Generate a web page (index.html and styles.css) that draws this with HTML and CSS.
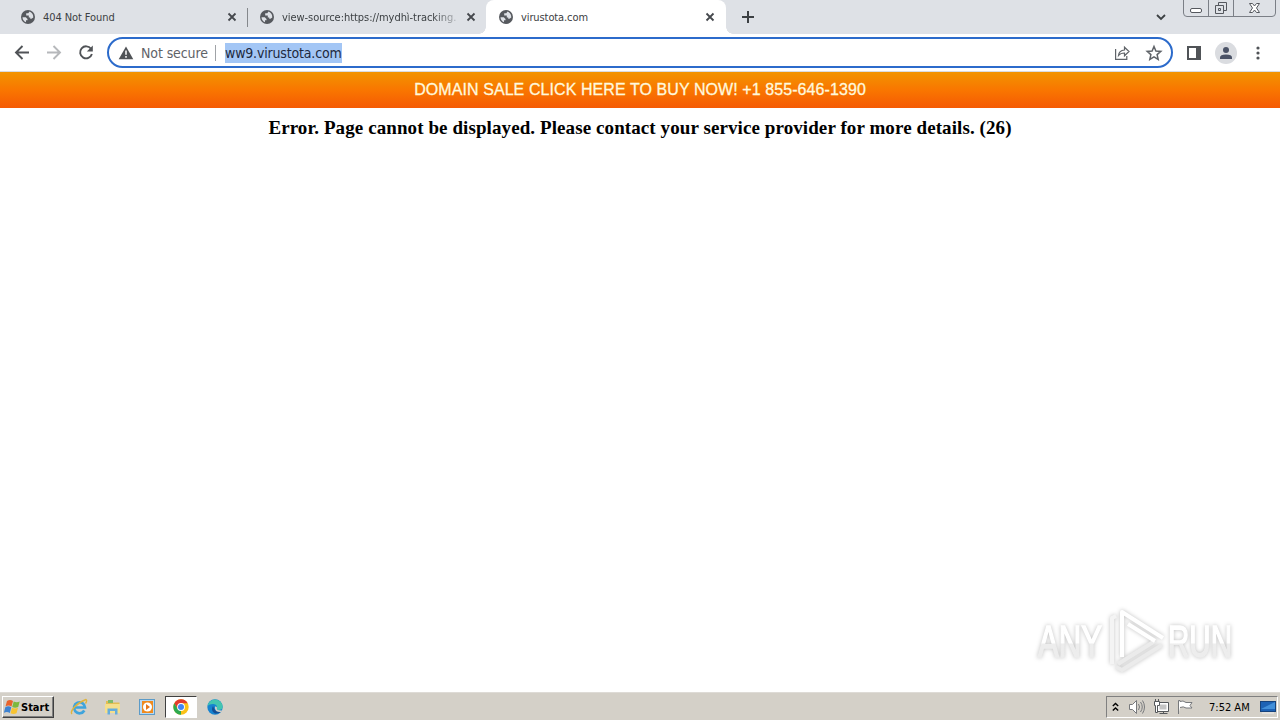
FILE: index.html
```
<!DOCTYPE html>
<html lang="en">
<head>
<meta charset="UTF-8">
<meta name="viewport" content="width=device-width, initial-scale=1.0">
<title>virustota.com</title>
<link rel="stylesheet" href="styles.css">
</head>
<body>
<svg class="defs" width="0" height="0">
    <symbol id="globe" viewBox="0 0 14 14">
        <circle cx="7" cy="7" r="7" fill="#56595e"/>
        <path d="M1.500 7.300h3.300l1.700 1.600v1.300H5v2Q1.700 11 1.500 7.300zM8.500 1.600 7.300 3.200H5.200v2.200h2.600v2h1.400v1.300h1.300l1.800-1.200Q12.300 3 8.500 1.600z" fill="#dee1e6"/>
    </symbol>
    <symbol id="close" viewBox="0 0 10 10">
        <path d="M1.500 1.500l7 7M8.500 1.500l-7 7" stroke="#45484d" stroke-width="1.800"/>
    </symbol>
</svg>

<div class="tabstrip">
    <div class="tab">
        <svg class="favicon"><use href="#globe"/></svg>
        <span class="tab-title t1">404 Not Found</span>
        <svg class="close"><use href="#close"/></svg>
    </div>
    <div class="tab second">
        <svg class="favicon"><use href="#globe"/></svg>
        <span class="tab-title t2">view-source:https://mydhì-tracking.</span>
        <svg class="close"><use href="#close"/></svg>
    </div>
    <div class="tab active">
        <svg class="favicon"><use href="#globe"/></svg>
        <span class="tab-title t3">virustota.com</span>
        <svg class="close"><use href="#close"/></svg>
    </div>
    <svg class="new-tab" width="12" height="12"><path d="M6 0v12M0 6h12" stroke="#3c4043" stroke-width="2"/></svg>
    <svg class="tab-search" width="10" height="7"><path d="M1 1l4 4 4-4" fill="none" stroke="#3c4043" stroke-width="1.800"/></svg>
    <svg class="window-buttons" width="94" height="18" fill="none" stroke="#7b7f86">
        <path d="M.5 0v13q0 3.500 3.500 3.500h85q3.500 0 3.500-3.500V0M25.500 0v16M50.500 0v16"/>
        <rect x="7.500" y="8.500" width="11" height="4" rx="1.500" fill="#fff" stroke="#55585e"/>
        <path d="M35.500 5V2.500h8v8H41M32.500 5.500h8v8h-8zM35.500 8.500h2v2h-2z" stroke="#55585e"/>
        <path d="M66.500 3.500h3l2 2.500 2-2.500h3L73.500 8l3 4.500h-3l-2-2.500-2 2.500h-3l3-4.500z" fill="#fff" stroke="#55585e"/>
    </svg>
</div>

<div class="toolbar">
    <svg class="nav" width="100" height="37" fill="none" stroke-width="1.900">
        <path d="M29 18.500H16.500M22.500 12l-6.500 6.500 6.500 6.500" stroke="#505357"/>
        <path d="M47 18.500h12.500M53.500 12l6.500 6.500-6.500 6.500" stroke="#b6b8bb"/>
        <path d="M91 14.800a6 6 0 1 0 .9 5.200" stroke="#505357"/>
        <path d="M92.800 11.500v6h-6z" fill="#505357"/>
    </svg>
    <div class="omnibox">
        <svg class="warning" width="16" height="14"><path d="M8 .5l7.300 12.700H.7z" fill="#505357"/><path d="M8 4.500v4.300M8 10v1.700" stroke="#fff" stroke-width="1.500"/></svg>
        <span class="not-secure">Not secure</span>
        <span class="divider"></span>
        <span class="url">ww9.virustota.com</span>
        <svg class="omnibox-icons" width="50" height="18" fill="none" stroke="#5f6368" stroke-width="1.200">
            <path d="M2.600 5v10.400h11.200V12"/>
            <path d="M5.500 11.500q.5-5 6-5.500V3.200l4.500 4.300-4.500 4.300V9q-4 0-6 2.500z"/>
            <path d="M41 2.500l1.900 4.500 4.900.4-3.700 3.200 1.100 4.800L41 12.900l-4.200 2.500 1.100-4.800-3.700-3.200 4.900-.4z" stroke-width="1.500"/>
        </svg>
    </div>
    <svg class="panel-icon" width="14" height="14"><rect x="1" y="1" width="12" height="12" fill="none" stroke="#505357" stroke-width="2"/><path d="M9 1h4v12H9z" fill="#505357"/></svg>
    <svg class="avatar" width="22" height="22"><circle cx="11" cy="11" r="11" fill="#dadce0"/><circle cx="11" cy="8" r="3" fill="#4a5266"/><path d="M5 17v-1.500Q5 12.500 11 12.500t6 3V17z" fill="#4a5266"/></svg>
    <svg class="menu" width="4" height="14" fill="#505357"><circle cx="2" cy="2" r="1.600"/><circle cx="2" cy="7" r="1.600"/><circle cx="2" cy="12" r="1.600"/></svg>
</div>

<div class="page">
    <div class="sale-banner"><span>DOMAIN SALE CLICK HERE TO BUY NOW! +1 855-646-1390</span></div>
    <h1 class="error">Error. Page cannot be displayed. Please contact your service provider for more details. (26)</h1>
</div>

<svg class="watermark" width="220" height="74" viewBox="0 0 220 74">
    <defs>
        <linearGradient id="fade" x1="0" y1="0" x2="0" y2="1">
            <stop offset="0.520" stop-color="#fff"/>
            <stop offset="0.560" stop-color="#ededed"/>
        </linearGradient>
    </defs>
    <g class="watermark-text" fill="url(#fade)" stroke="url(#fade)">
        <text x="8" y="54" textLength="64" lengthAdjust="spacingAndGlyphs">ANY</text>
        <text x="138" y="54" textLength="64" lengthAdjust="spacingAndGlyphs">RUN</text>
    </g>
    <g fill="none" stroke-width="4" stroke-linejoin="round">
        <path d="M132 42L92 67l-6-3M125 38L88 61" stroke="#ebebeb"/>
        <path d="M82 61V15l4-2" stroke="#f4f4f4"/>
        <path d="M92 54V9l41 26M98 21l27 17" stroke="#fff"/>
    </g>
</svg>

<div class="taskbar">
    <div class="start">
        <svg width="17" height="16" viewBox="0 0 17 16">
            <path d="M3 2q3-2 6 0L7.500 7.500q-3-2-6 0z" fill="#e9632b"/>
            <path d="M9.700 2.500q3 1.500 6 0L14.200 8q-3 1.500-6 0z" fill="#7db83d"/>
            <path d="M1.300 8.300q3-2 6 0L5.800 14q-3-2-6 0z" fill="#3e82d0"/>
            <path d="M8 8.800q3 1.500 6 0l-1.500 5.500q-3 1.500-6 0z" fill="#f7c331"/>
        </svg>
        <span>Start</span>
    </div>
    <div class="launch">
        <svg width="18" height="18" fill="none">
            <path d="M14.300 12.500a5.500 5.500 0 1 1 .7-3H5" stroke="#3fa4dc" stroke-width="2.700"/>
            <path d="M2 16q-2-2 2.500-7T16 1.500q1.500 1-.5 4" stroke="#e0b43c" stroke-width="1.400"/>
        </svg>
    </div>
    <div class="launch">
        <svg width="18" height="18">
            <path d="M2 3h5l1 1.500h7.500V15H2z" fill="#e3bd52"/>
            <path d="M4 2h5v3H4z" fill="#7fbb6a"/>
            <path d="M1 6h15v9H1z" fill="#f5df8c"/>
            <path d="M3.500 16.500v-6h10v6H11v-3.500H6v3.500z" fill="#66addb"/>
        </svg>
    </div>
    <div class="launch">
        <svg width="18" height="18">
            <rect x="1.500" y="1.500" width="15" height="15" fill="#b8d9f2" stroke="#5c9bc8"/>
            <rect x="4" y="3" width="11" height="12" fill="#f08a1d"/>
            <circle cx="9.500" cy="9" r="4.500" fill="#fff"/>
            <path d="M8 6l4 3-4 3z" fill="#e8781a"/>
        </svg>
    </div>
    <div class="launch pressed">
        <svg width="16" height="16" viewBox="0 0 16 16">
            <circle cx="8" cy="8" r="7.700" fill="#fbc116"/>
            <path d="M8 8 4.700 10 1.300 4.200A7.700 7.700 0 0 1 14.700 4.200H8z" fill="#e33b2e"/>
            <path d="M1.300 4.200 4.700 10 8 11.500 8 15.700A7.700 7.700 0 0 1 1.300 4.200z" fill="#2da94f"/>
            <circle cx="8" cy="8" r="3.900" fill="#fff"/>
            <circle cx="8" cy="8" r="3" fill="#4285f4"/>
        </svg>
    </div>
    <div class="launch">
        <svg width="16" height="16" viewBox="0 0 16 16">
            <circle cx="8" cy="8" r="7.700" fill="#1683d0"/>
            <path d="M.4 7A7.700 7.700 0 0 1 15.700 8q-.5 3.500-5 3-1.500-.8-.8-2Q10.500 5.500 6.500 5 2.500 4.800.4 7z" fill="#43c5b0"/>
            <path d="M6 7q-3 5 2 7.500Q12.500 15 14.500 12 9 13.500 7.300 10z" fill="#154e94"/>
            <path d="M8 7.500q2-.5 2 1.500-.8 1.200.7 2l4.500.7-1 1.300q-5.500.5-6.200-3.500z" fill="#d4d0c8"/>
        </svg>
    </div>
    <div class="tray">
        <svg class="chevrons" width="7" height="11" fill="none" stroke="#000" stroke-width="1.400"><path d="M.8 4l2.700-2.500L6.200 4M.8 8.500L3.500 6l2.700 2.500"/></svg>
        <svg class="tray-icons" width="70" height="18" fill="#fff" stroke="#77797c">
            <path d="M1.500 6.500h3l4-4v13l-4-4h-3z"/>
            <path d="M10.500 6q2 3 0 6M12.500 4q3.500 5 0 10M14.500 2.500q4 6.500 0 13" fill="none"/>
            <path d="M29.500 4.500h11v9h-11zM31.500 15.500h8M35.500 13.500v2" stroke="#55585b"/>
            <path d="M31.500 6.500h7v5h-7z" fill="#c4c4c4" stroke="none"/>
            <path d="M26.500 3.500h5v4h-2v7h-2v-7h-1zM27.500 1v2M30.500 1v2" stroke="#55585b"/>
            <path d="M50.500 16V2.500h1.500v1q3-1.500 6 1h6l-2 3 2 2.500h-6q-2.500-2-6-.5"/>
        </svg>
        <span class="clock">7:52 AM</span>
        <svg class="show-desktop" width="16" height="13"><rect x=".5" y=".5" width="15" height="10" fill="#1d62b5" stroke="#16427c"/><path d="M1 8L15 1v7z" fill="#428fd9"/><path d="M2 12h12" stroke="#eee"/></svg>
    </div>
</div>
</body>
</html>
```
FILE: styles.css
```
body {
    display: flex;
    flex-direction: column;
    width: 1280px;
    height: 720px;
    margin: 0;
    overflow: hidden;
    background: #fff;
    font-family: "DejaVu Sans Condensed", "DejaVu Sans", sans-serif;
    font-stretch: condensed;
}
svg {
    flex: none;
}
.defs {
    position: absolute;
}
.tabstrip {
    display: flex;
    align-items: center;
    height: 34px;
    flex: none;
    background: #dee1e6;
}
.tab {
    display: flex;
    align-items: center;
    box-sizing: border-box;
    width: 248px;
    height: 34px;
    padding: 0 11px 0 21px;
    font-size: 11px;
    color: #3c4043;
}
.tab.second {
    width: 238px;
    padding: 0 10px 0 12px;
    border-radius: 0 0 7px 0;
}
.tab.active {
    width: 240px;
    padding: 0 11px 0 13px;
    border-radius: 8px 8px 0 0;
    background: #fff;
}
/* curved feet where the active tab meets the toolbar */
.tab.active::before,
.tab.active::after {
    content: "";
    align-self: flex-end;
    flex: none;
    width: 7px;
    height: 7px;
}
.tab.active::before {
    margin-left: -20px;
    margin-right: 13px;
    background: radial-gradient(circle at 0 0, transparent 6.5px, #fff 7px);
}
.tab.active::after {
    margin-left: 11px;
    margin-right: -18px;
    background: radial-gradient(circle at 100% 0, transparent 6.5px, #fff 7px);
}
.favicon {
    width: 14px;
    height: 14px;
}
.close {
    width: 10px;
    height: 10px;
    margin-left: auto;
}
.tab-title {
    margin-left: 8px;
    white-space: nowrap;
}
.t1 {
    letter-spacing: -0.08px;
}
.t2 {
    letter-spacing: -0.05px;
    -webkit-mask-image: linear-gradient(to right, #000 150px, transparent 182px);
    mask-image: linear-gradient(to right, #000 150px, transparent 182px);
}
.t3 {
    letter-spacing: -0.1px;
}
.tab.second::before {
    content: "";
    width: 1px;
    height: 19px;
    margin-left: -13px;
    margin-right: 12px;
    background: #85888c;
}
.new-tab {
    margin-left: 16px;
}
.tab-search {
    margin-left: auto;
}
.window-buttons {
    align-self: flex-start;
    margin: 0 3px 0 17px;
}
.toolbar {
    display: flex;
    align-items: center;
    height: 37px;
    flex: none;
    border-bottom: 1px solid #dadce0;
}
.omnibox {
    display: flex;
    align-items: center;
    box-sizing: border-box;
    width: 1066px;
    height: 31px;
    margin-left: 7px;
    padding: 0 8px 0 9px;
    border: 2px solid #2c6bcb;
    border-radius: 16px;
    font-size: 14px;
}
.not-secure {
    margin-left: 7px;
    width: 67px;
    color: #5f6368;
    letter-spacing: -0.1px;
    white-space: nowrap;
}
.divider {
    width: 1px;
    height: 16px;
    margin: 0 9px 0 7px;
    background: #a0a3a7;
}
.url {
    width: 117px;
    height: 20px;
    line-height: 21px;
    background: #a3c6f5;
    color: #202940;
    letter-spacing: -0.17px;
    white-space: nowrap;
}
.omnibox-icons {
    margin-left: auto;
}
.panel-icon {
    margin-left: 14px;
}
.avatar {
    margin-left: 14px;
}
.menu {
    margin-left: 19px;
}
.page {
    flex: 1;
}
.sale-banner {
    height: 36px;
    background: linear-gradient(#f29400, #f97600 50%, #f55a04);
    color: #fff8dc;
    font: 16px/35px "Liberation Sans", Arial, sans-serif;
    letter-spacing: 0.08px;
    text-align: center;
    -webkit-text-stroke: 0.3px #fff8dc;
}
.error {
    margin: 9px 0 0;
    font: bold 19px/22px "Liberation Serif", "Times New Roman", serif;
    letter-spacing: 0.09px;
    color: #000;
    text-align: center;
    white-space: nowrap;
}
/* translucent logo over the lower right corner of the page */
.watermark {
    position: absolute;
    left: 1030px;
    top: 603px;
    filter: drop-shadow(0 0 2px rgba(0, 0, 0, 0.25));
}
.watermark-text {
    font: 44px "Liberation Sans", Arial, sans-serif;
    stroke-width: 1.5px;
}
.taskbar {
    display: flex;
    align-items: center;
    box-sizing: border-box;
    height: 27px;
    flex: none;
    padding: 1px 2px 0;
    background: #d4d0c8;
    box-shadow: 0 -1px #dedbd6;
}
.start {
    display: flex;
    align-items: center;
    box-sizing: border-box;
    width: 52px;
    height: 22px;
    margin-right: 9px;
    padding-left: 1px;
    border: 1px solid;
    border-color: #fff #404040 #404040 #fff;
    box-shadow: inset -1px -1px #808080;
    font-size: 11px;
    font-weight: bold;
}
.launch {
    display: flex;
    align-items: center;
    justify-content: center;
    box-sizing: border-box;
    width: 32px;
    height: 22px;
    margin-right: 2px;
}
.pressed {
    border: 1px solid;
    border-color: #404040 #fff #fff #404040;
    background: #fff;
}
.tray {
    display: flex;
    align-items: center;
    box-sizing: border-box;
    width: 172px;
    height: 22px;
    margin-left: auto;
    padding-left: 5px;
    border: 1px solid;
    border-color: #808080 #fff #fff #808080;
    font-size: 11px;
}
.tray-icons {
    margin-left: 9px;
}
.clock {
    width: 42px;
    margin-left: 11px;
    white-space: nowrap;
}
.show-desktop {
    margin-left: 9px;
}
```
